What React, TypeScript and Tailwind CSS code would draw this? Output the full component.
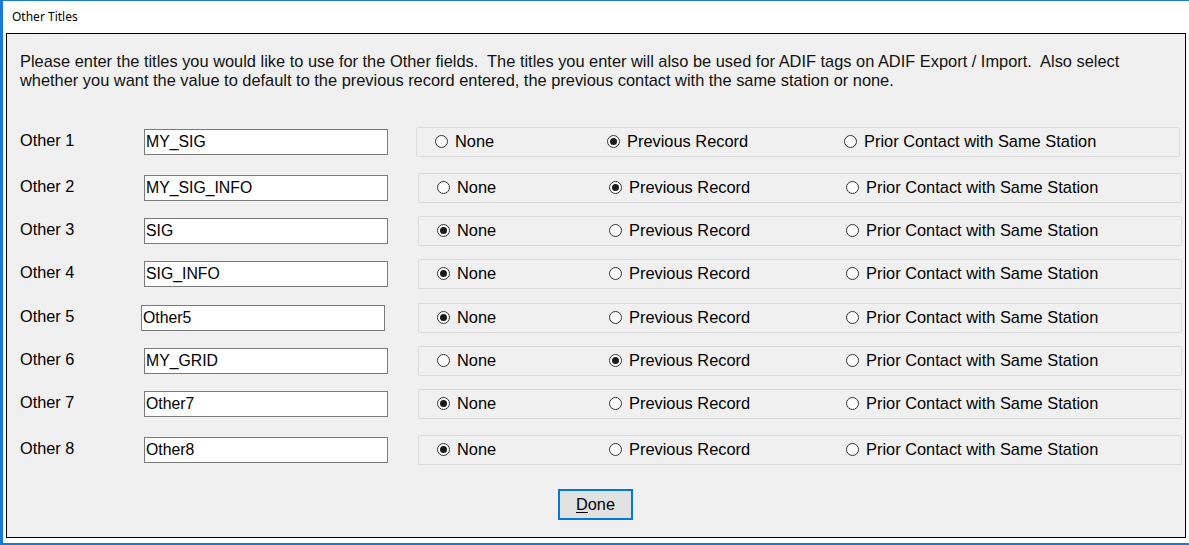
import React from "react";

type Row = { label: string; value: string; sel: 0 | 1 | 2; mt: string; inputMl: string; boxMl: string };

const rows: Row[] = [
  { label: "Other 1", value: "MY_SIG", sel: 1, mt: "mt-0", inputMl: "ml-[124px]", boxMl: "ml-[28px]" },
  { label: "Other 2", value: "MY_SIG_INFO", sel: 1, mt: "mt-[3px]", inputMl: "ml-[124px]", boxMl: "ml-[30px]" },
  { label: "Other 3", value: "SIG", sel: 0, mt: "mt-0", inputMl: "ml-[124px]", boxMl: "ml-[30px]" },
  { label: "Other 4", value: "SIG_INFO", sel: 0, mt: "mt-0", inputMl: "ml-[124px]", boxMl: "ml-[30px]" },
  { label: "Other 5", value: "Other5", sel: 0, mt: "mt-[1px]", inputMl: "ml-[121px]", boxMl: "ml-[33px]" },
  { label: "Other 6", value: "MY_GRID", sel: 1, mt: "mt-0", inputMl: "ml-[124px]", boxMl: "ml-[30px]" },
  { label: "Other 7", value: "Other7", sel: 0, mt: "mt-0", inputMl: "ml-[124px]", boxMl: "ml-[30px]" },
  { label: "Other 8", value: "Other8", sel: 0, mt: "mt-[3px]", inputMl: "ml-[124px]", boxMl: "ml-[30px]" },
];

function Radio({ checked, label }: { checked: boolean; label: string }) {
  return (
    <div className="flex items-center">
      <span className="w-[13px] h-[13px] rounded-full border border-[#333333] bg-white flex items-center justify-center shrink-0">
        {checked && <span className="w-[7px] h-[7px] rounded-full bg-[#1a1a1a]" />}
      </span>
      <span className="ml-[7px] text-[16.4px] leading-[19px] text-black">{label}</span>
    </div>
  );
}

export default function App() {
  return (
    <div
      className="w-[1189px] h-[545px] bg-white overflow-hidden flex flex-col border-t border-t-[#1b7bd1] border-l-[3px] border-l-[#1b7bd1] border-b-[2px] border-b-[#1b7bd1]"
      style={{ fontFamily: '"Liberation Sans", Arial, sans-serif' }}
    >
      <div className="h-[32px] shrink-0 flex items-center pl-[9px] pb-[1px] text-[12px] text-black" style={{ fontFamily: '"Noto Sans", "Open Sans", sans-serif' }}>
        Other Titles
      </div>
      <div className="ml-[3px] w-[1180px] h-[505px] border border-black bg-[#f0f0f0] flex flex-col pl-[13px] pt-[18px]">
        <p className="text-[16.4px] leading-[19px] text-[#111]">
          Please enter the titles you would like to use for the Other fields.&nbsp; The titles you enter will also be used for ADIF tags on ADIF Export / Import.&nbsp; Also select
          <br />
          whether you want the value to default to the previous record entered, the previous contact with the same station or none.
        </p>
        <div className="mt-[30px] flex flex-col">
          {rows.map((r) => (
            <div key={r.label} className={`h-[43px] flex items-center ${r.mt}`}>
              <span className="w-[0px] whitespace-nowrap text-[16.3px] leading-[19px] text-black -mt-[3px]">{r.label}</span>
              <div className={`${r.inputMl} w-[244px] h-[26px] bg-white border border-[#7a7a7a] flex items-center pl-[1px] text-[15.8px] text-black`}>
                {r.value}
              </div>
              <div className={`${r.boxMl} -mr-[2px] w-[764px] h-[30px] border border-[#dcdcdc] rounded-[2px] flex items-center pl-[18px]`}>
                <div className="w-[172px]">
                  <Radio checked={r.sel === 0} label="None" />
                </div>
                <div className="w-[237px]">
                  <Radio checked={r.sel === 1} label="Previous Record" />
                </div>
                <Radio checked={r.sel === 2} label="Prior Contact with Same Station" />
              </div>
            </div>
          ))}
        </div>
        <div className="mt-[18px] ml-[538px] w-[75px] h-[31px] border-2 border-[#0078d7] bg-[#e1e1e1] flex items-center justify-center text-[16.3px] text-black">
          <span><span className="underline underline-offset-2">D</span>one</span>
        </div>
      </div>
    </div>
  );
}
